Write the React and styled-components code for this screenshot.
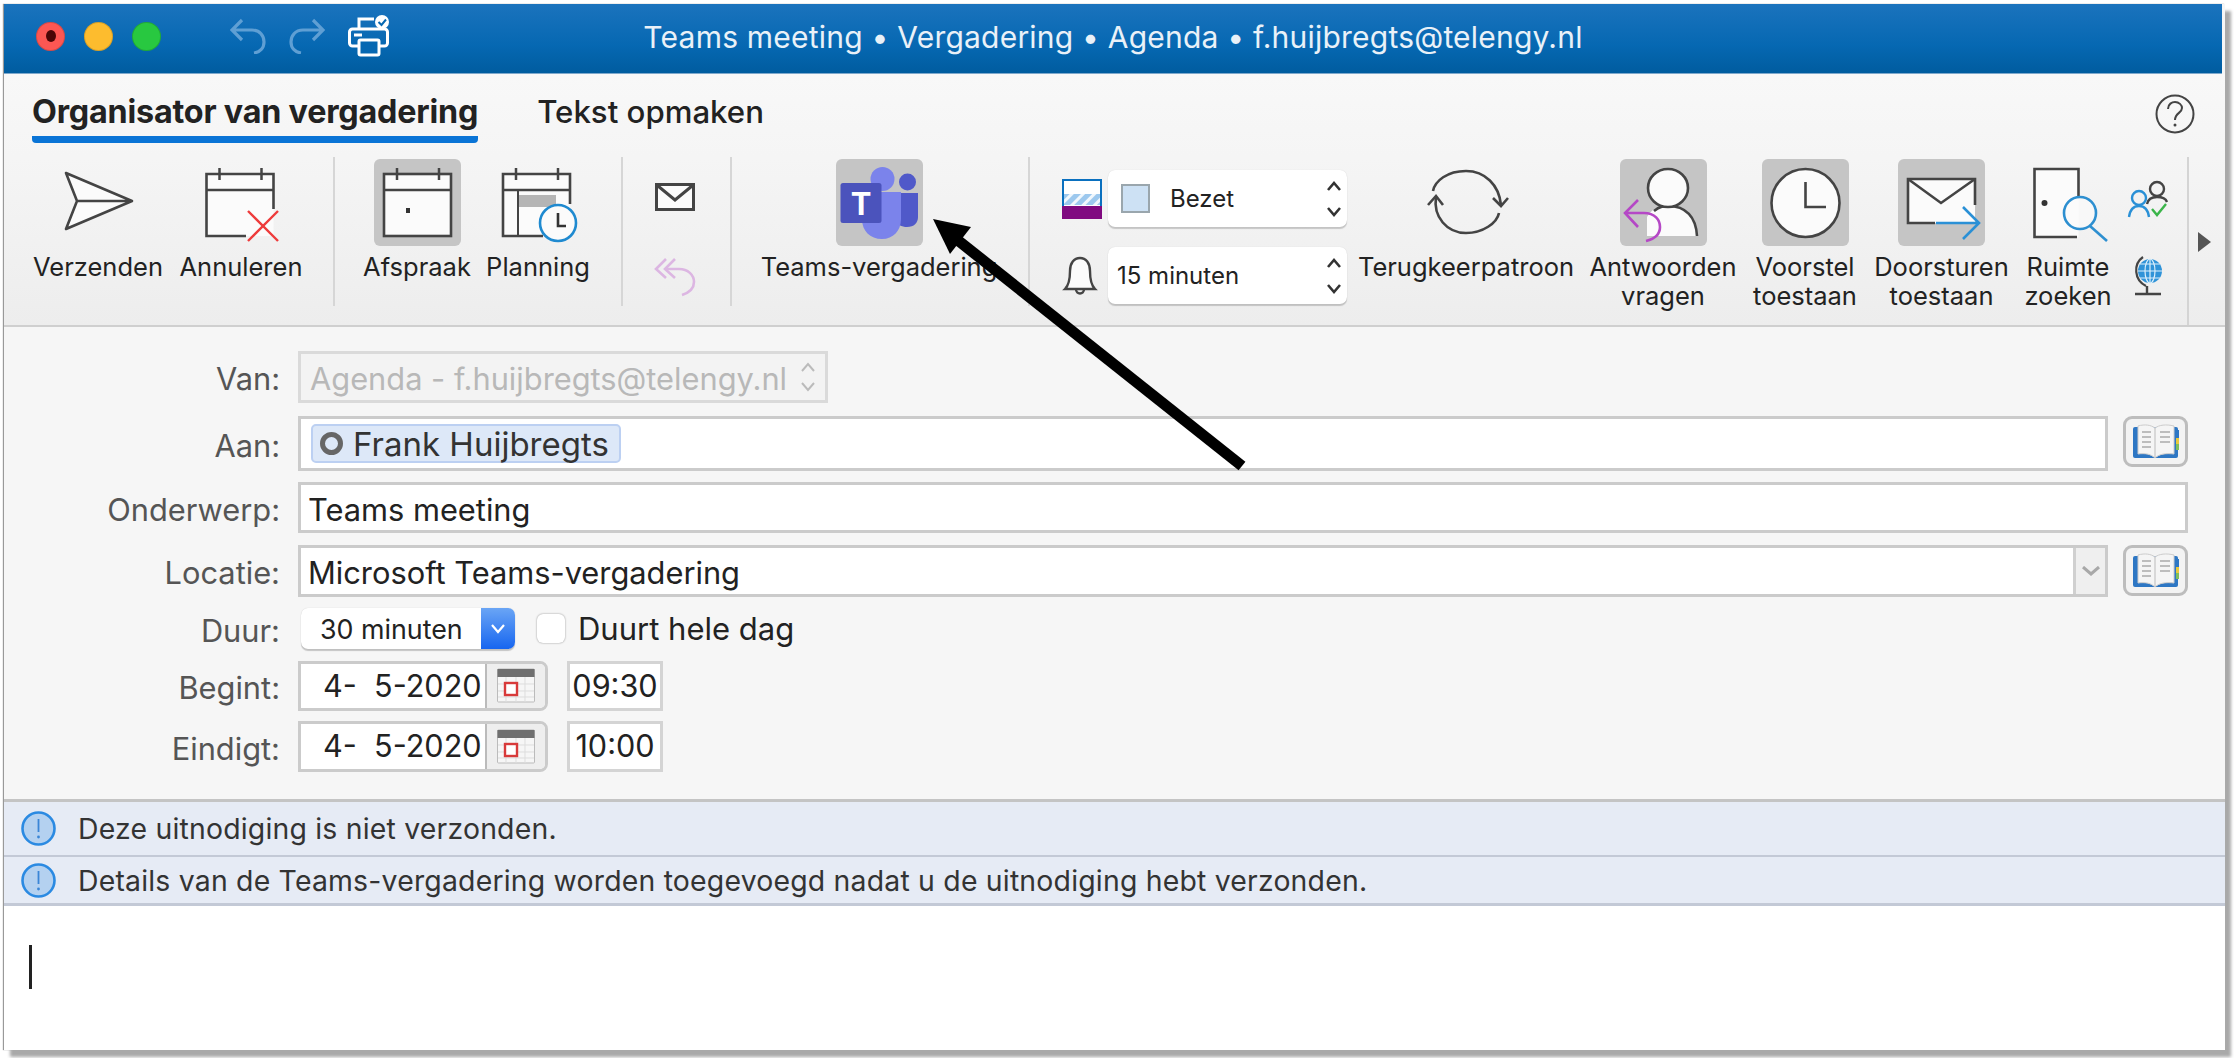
import React from "react";
import styled, { createGlobalStyle } from "styled-components";

const Global = createGlobalStyle`
  html, body { margin: 0; padding: 0; background: #fff; }
  body { font-family: Inter, "Liberation Sans", sans-serif; color: #222; }
`;

const Page = styled.div`
  position: relative;
  width: 2234px;
  height: 1058px;
  padding: 4px 0 0 4px;
  box-sizing: border-box;
  overflow: hidden;
  background: #fff;
`;
const Win = styled.div`
  width: 2221px;
  height: 1046px;
  display: flex;
  flex-direction: column;
  background: #f6f6f6;
  box-shadow: 6px 7px 3px #a9a9a9, -1px 0 1px #999;
`;
const TitleBar = styled.div`
  flex: 0 0 70px;
  position: relative;
  display: flex;
  align-items: center;
  justify-content: center;
  margin-right: 3px;
  background: linear-gradient(#1b73bd, #0668b2 60%, #005c9f);
  border-bottom: 1px solid #7fa9cc;
  box-sizing: border-box;
`;
const TitleLeft = styled.div`
  position: absolute;
  left: 32px;
  top: 0;
  height: 64px;
  display: flex;
  align-items: center;
`;
const Light = styled.span`
  width: 29px;
  height: 29px;
  border-radius: 50%;
  margin-right: 19px;
  background: ${(p) => p.$c};
  box-shadow: inset 0 0 0 1px rgba(0, 0, 0, 0.15);
  display: flex;
  align-items: center;
  justify-content: center;
`;
const LightDot = styled.span`
  width: 10px;
  height: 12px;
  border-radius: 50%;
  background: #4a0606;
`;
const TitleIcons = styled.div`
  display: flex;
  align-items: center;
  margin-left: 50px;
  gap: 23px;
`;
const TitleText = styled.div`
  color: #e9f1f8;
  font-size: 30px;
  letter-spacing: 0.22px;
  margin-top: -4px;
  white-space: nowrap;
`;
const Tabs = styled.div`
  height: 83px;
  display: flex;
  padding-left: 28px;
  position: relative;
  background: linear-gradient(#f8f8f8, #f5f5f5);
  box-sizing: border-box;
`;
const Tab = styled.div`
  height: 69px;
  box-sizing: border-box;
  padding-top: 17px;
  margin-right: 59px;
  font-size: ${(p) => (p.$active ? 32.3 : 31.2)}px;
  line-height: 42px;
  font-weight: ${(p) => (p.$active ? 700 : 500)};
  letter-spacing: ${(p) => (p.$active ? "-0.2px" : "0")};
  color: #222;
  border-bottom: ${(p) => (p.$active ? "7px solid #0a74d6" : "7px solid transparent")};
  border-radius: 0 0 4px 4px;
  white-space: nowrap;
`;
const HelpBtn = styled.div`
  position: absolute;
  left: 2151px;
  top: 20px;
`;
const Tools = styled.div`
  height: 170px;
  display: flex;
  align-items: flex-start;
  padding-left: 30px;
  box-sizing: border-box;
  background: linear-gradient(#f5f5f5, #ededed);
  border-bottom: 2px solid #cfcfcf;
  position: relative;
`;
const ToolsEdge = styled.div`
  position: absolute;
  left: 2183px;
  top: 0;
  bottom: 0;
  width: 2px;
  background: #d4d4d4;
`;
const MoreArrow = styled.div`
  position: absolute;
  left: 2194px;
  top: 75px;
  width: 0;
  height: 0;
  border-left: 13px solid #555;
  border-top: 10px solid transparent;
  border-bottom: 10px solid transparent;
`;
const Divider = styled.div`
  flex: none;
  width: 2px;
  height: 149px;
  background: #d6d6d6;
  margin-left: ${(p) => p.$ml}px;
`;
const Tool = styled.div`
  flex: none;
  width: ${(p) => p.$w}px;
  margin-left: ${(p) => p.$ml}px;
  display: flex;
  flex-direction: column;
  align-items: center;
  padding-top: 2px;
`;
const IconSlot = styled.div`
  width: 87px;
  height: 87px;
  border-radius: 6px;
  background: ${(p) => (p.$on ? "#c5c5c5" : "transparent")};
  flex: none;
  svg { display: block; overflow: visible; }
`;
const ToolLabel = styled.div`
  margin-top: 6px;
  font-size: 25.5px;
  line-height: 29px;
  text-align: center;
  white-space: nowrap;
  color: #222;
`;
const SmallStack = styled.div`
  flex: none;
  width: ${(p) => p.$w}px;
  margin-left: ${(p) => p.$ml}px;
  display: flex;
  flex-direction: column;
  align-items: center;
  padding-top: ${(p) => p.$pt}px;
  gap: ${(p) => p.$gap}px;
  svg { display: block; overflow: visible; }
`;
const StatusBlock = styled.div`
  flex: none;
  margin-left: 32px;
  width: 285px;
  padding-top: 13px;
  display: flex;
  flex-direction: column;
  gap: 20px;
`;
const StatusRow = styled.div`
  display: flex;
  align-items: center;
  svg { display: block; flex: none; }
`;
const IconBox = styled.div`
  width: 46px;
  flex: none;
  display: flex;
  justify-content: flex-start;
`;
const Select = styled.div`
  width: 239px;
  height: 57px;
  box-sizing: border-box;
  background: #fff;
  border-radius: 7px;
  box-shadow: 0 2px 1px rgba(0, 0, 0, 0.18), 0 0 1px rgba(0, 0, 0, 0.15);
  display: flex;
  align-items: center;
  padding: 0 6px 0 ${(p) => p.$pl}px;
  font-size: 24px;
  color: #222;
`;
const Swatch = styled.span`
  width: 29px;
  height: 29px;
  box-sizing: border-box;
  background: #cde1f4;
  border: 2px solid #9aa6ad;
  margin-right: 20px;
  flex: none;
`;
const Spacer = styled.span`
  flex: 1;
`;
const Form = styled.div`
  height: 475px;
  box-sizing: border-box;
  padding-top: 24px;
  background: #f6f6f6;
  border-bottom: 3px solid #c4c4c4;
`;
const Row = styled.div`
  display: flex;
  align-items: center;
  height: ${(p) => p.$h}px;
  margin-top: ${(p) => p.$mt}px;
`;
const Label = styled.div`
  flex: none;
  width: 276px;
  text-align: right;
  margin-right: 18px;
  padding-top: 3px;
  font-size: 30.8px;
  color: #555;
  white-space: nowrap;
`;
const Field = styled.div`
  height: 100%;
  width: ${(p) => p.$w}px;
  box-sizing: border-box;
  border: 3px solid ${(p) => (p.$muted ? "#dadada" : "#cbcbcb")};
  background: ${(p) => (p.$muted ? "#f3f3f3" : "#fff")};
  color: ${(p) => (p.$muted ? "#b8b8b8" : "#222")};
  font-size: 30.8px;
  display: flex;
  align-items: center;
  padding-left: ${(p) => p.$pl}px;
  white-space: nowrap;
  flex: none;
`;
const FieldText = styled.span`
  padding-top: 3px;
`;
const Chip = styled.div`
  height: 39px;
  box-sizing: border-box;
  border: 2px solid #bcd0f2;
  border-radius: 5px;
  background: #dde8f8;
  display: flex;
  align-items: center;
  padding: 0 10px 0 7px;
  font-size: 33px;
  color: #333;
`;
const ChipDot = styled.span`
  width: 23px;
  height: 23px;
  box-sizing: border-box;
  border: 5px solid #666;
  border-radius: 50%;
  margin-right: 10px;
  flex: none;
`;
const DropPart = styled.div`
  margin-left: auto;
  width: 32px;
  height: 100%;
  background: #efefef;
  border-left: 3px solid #d0d0d0;
  box-sizing: border-box;
  display: flex;
  align-items: center;
  justify-content: center;
`;
const BookBtn = styled.div`
  flex: none;
  width: 65px;
  height: 51px;
  margin-left: 15px;
  align-self: flex-start;
  box-sizing: border-box;
  border: 3px solid #bdbdbd;
  border-radius: 9px;
  background: #f3f3f3;
  display: flex;
  align-items: center;
  justify-content: center;
`;
const DurSelect = styled.div`
  margin-left: 3px;
  width: 214px;
  height: 41px;
  flex: none;
  box-sizing: border-box;
  border-radius: 7px;
  background: #fff;
  box-shadow: 0 2px 1px rgba(0, 0, 0, 0.2), 0 0 1px rgba(0, 0, 0, 0.2);
  display: flex;
  align-items: center;
  padding-left: 19px;
  font-size: 26.8px;
  color: #222;
  overflow: hidden;
  white-space: nowrap;
`;
const DurBlue = styled.span`
  margin-left: auto;
  width: 34px;
  height: 100%;
  background: linear-gradient(#6aa5f5, #1766f0);
  display: flex;
  align-items: center;
  justify-content: center;
`;
const Check = styled.span`
  width: 28px;
  height: 29px;
  box-sizing: border-box;
  margin-left: 22px;
  background: #fff;
  border-radius: 6px;
  box-shadow: 0 0 2px rgba(0, 0, 0, 0.45);
  flex: none;
`;
const CheckText = styled.span`
  margin-left: 13px;
  font-size: 31px;
  color: #222;
`;
const DateField = styled.div`
  height: 100%;
  width: 250px;
  flex: none;
  display: flex;
  box-sizing: border-box;
  border: 3px solid #cbcbcb;
  border-radius: 0 8px 8px 0;
  background: #fff;
`;
const DateText = styled.div`
  width: 184px;
  flex: none;
  box-sizing: border-box;
  padding: 0 0 2px 22px;
  display: flex;
  align-items: center;
  font-size: 30.6px;
  white-space: pre;
  color: #222;
`;
const DateBtn = styled.div`
  flex: 1;
  background: #eee;
  border-left: 2px solid #bbb;
  border-radius: 0 5px 5px 0;
  display: flex;
  align-items: center;
  justify-content: center;
`;
const TimeField = styled.div`
  height: 100%;
  width: 96px;
  flex: none;
  margin-left: 19px;
  box-sizing: border-box;
  border: 3px solid #d4d4d4;
  background: #fff;
  display: flex;
  align-items: center;
  justify-content: center;
  padding-bottom: 2px;
  font-size: 30.6px;
  color: #222;
`;
const InfoBar = styled.div`
  height: ${(p) => p.$h}px;
  box-sizing: border-box;
  background: #e6ebf5;
  border-bottom: ${(p) => p.$b}px solid #c3c9d6;
  display: flex;
  align-items: center;
  padding-left: 17px;
  font-size: 28.4px;
  letter-spacing: 0.2px;
  color: #333;
  white-space: nowrap;
  svg { flex: none; margin-right: 22px; }
`;
const Body = styled.div`
  flex: 1;
  background: #fff;
  padding: 39px 0 0 25px;
`;
const Caret = styled.div`
  width: 3px;
  height: 44px;
  background: #222;
`;
const ArrowOverlay = styled.svg`
  position: absolute;
  left: 0;
  top: 0;
  pointer-events: none;
`;

const D = "#444";

const Chevrons = ({ color = "#333" }) => (
  <svg width="14" height="38" viewBox="0 0 14 38" fill="none" stroke={color} strokeWidth="2.6">
    <path d="M1 10 L7 3 L13 10" />
    <path d="M1 28 L7 35 L13 28" />
  </svg>
);
const CalBody = ({ x = 8.5 }) => (
  <g stroke={D} strokeWidth="2.5" fill="none">
    <path d={`M${x + 13} 9 V21 M${x + 55} 9 V21`} />
    <path d={`M${x} 31 H${x + 67}`} />
  </g>
);
const Send = () => (
  <svg width="87" height="87" viewBox="0 0 87 87">
    <path d="M11 14 L77 42 L11 70 L22 42 Z M22 42 H77" fill="#fbfbfb" stroke={D} strokeWidth="2.6" strokeLinejoin="round" />
  </svg>
);
const Cancel = () => (
  <svg width="87" height="87" viewBox="0 0 87 87">
    <path d="M8.5 15 H75.5 V77 H8.5 Z" fill="#fbfbfb" />
    <path d="M48 77 H8.5 V15 H75.5 V50" fill="none" stroke={D} strokeWidth="2.6" />
    <CalBody />
    <path d="M50 52 L80 82 M80 52 L50 82" stroke="#ee3b3b" strokeWidth="2.4" />
  </svg>
);
const Appt = () => (
  <svg width="87" height="87" viewBox="0 0 87 87">
    <rect x="10" y="15" width="67" height="62" fill="#fbfbfb" stroke={D} strokeWidth="2.6" />
    <CalBody x={10} />
    <rect x="32" y="49" width="4" height="5" fill="#333" />
  </svg>
);
const Planning = () => (
  <svg width="87" height="87" viewBox="0 0 87 87">
    <path d="M8 15 H75 V77 H8 Z" fill="#fbfbfb" />
    <rect x="23" y="36" width="38" height="12" fill="#b5b5b5" />
    <path d="M48 77 H8 V15 H75 V45" fill="none" stroke={D} strokeWidth="2.6" />
    <path d="M23 31 V77" stroke={D} strokeWidth="2" />
    <CalBody x={8} />
    <circle cx="63" cy="64" r="18" fill="#fbfbfb" stroke="#1f8ad0" strokeWidth="2.6" />
    <path d="M63 54 V67 H71" fill="none" stroke="#333" strokeWidth="2.6" />
  </svg>
);
const MailSmall = () => (
  <svg width="40" height="28" viewBox="0 0 40 28" fill="#fbfbfb" stroke={D} strokeWidth="3">
    <rect x="1.5" y="1.5" width="37" height="25" />
    <path d="M3 3 L20 17 L37 3" fill="none" />
  </svg>
);
const ReplyAllPale = () => (
  <svg width="40" height="38" viewBox="0 0 40 38" fill="none" stroke="#dcb6e2" strokeWidth="2.6">
    <path d="M11 1 L1 11 L11 20" />
    <path d="M20 1 L10 11 L20 20" />
    <path d="M10 11 H24 C33 11 39 17 39 24 C39 31 33 35 27 37" />
  </svg>
);
const TeamsLogo = () => (
  <svg width="87" height="87" viewBox="0 0 87 87">
    <circle cx="71.5" cy="23" r="8.5" fill="#5059c9" />
    <path d="M60 34 H82 V58 C82 64 78 68 71 68 C66 68 60 66 60 60 Z" fill="#5059c9" />
    <circle cx="46.5" cy="20" r="12" fill="#7b83eb" />
    <path d="M26 33 H65 V60 C65 72 57 80 46 80 C34 80 26 72 26 60 Z" fill="#7b83eb" />
    <rect x="4.5" y="24" width="41" height="40" rx="2.5" fill="#4b53bc" />
    <text x="25" y="56" textAnchor="middle" fontFamily="Inter, sans-serif" fontWeight="700" fontSize="31" fill="#fff">T</text>
  </svg>
);
const StatusIcon = () => (
  <svg width="40" height="40" viewBox="0 0 40 40">
    <defs>
      <pattern id="hatch" width="8" height="8" patternUnits="userSpaceOnUse" patternTransform="rotate(45)">
        <rect width="8" height="8" fill="#9cc8ee" />
        <rect width="3" height="8" fill="#f0f7fd" />
      </pattern>
    </defs>
    <rect x="1" y="1" width="38" height="38" fill="#fff" stroke="#0a70bf" strokeWidth="2" />
    <rect x="2" y="15" width="36" height="11" fill="url(#hatch)" />
    <rect x="0" y="27" width="40" height="13" fill="#800a80" />
  </svg>
);
const Bell = () => (
  <svg width="36" height="40" viewBox="0 0 36 40" fill="#fbfbfb" stroke={D} strokeWidth="2.4">
    <path d="M3 33 C7 29 8 24 8 15 C8 7 12 2 18 2 C24 2 28 7 28 15 C28 24 29 29 33 33 Z" />
    <path d="M14 33 C14 39 22 39 22 33" fill="none" />
  </svg>
);
const Recur = () => (
  <svg width="87" height="87" viewBox="0 0 87 87" fill="none" stroke={D} strokeWidth="2.6">
    <path d="M43 12 C24 12 12 22 10 32" />
    <path d="M5 46 L13 37 L20 46" />
    <path d="M13 38 C10 58 24 74 43 74 C60 74 74 64 76 54" />
    <path d="M43 12 C62 12 76 26 78 46" />
    <path d="M70 39 L78 47 L85 39" />
  </svg>
);
const Asker = () => (
  <svg width="87" height="87" viewBox="0 0 87 87">
    <path d="M27 77 V58 C31 50 39 47 48 47 C66 47 76 58 77 77 Z" fill="#fbfbfb" />
    <path d="M34 52 C40 47 44 47 48 47 C66 47 76 58 77 77" fill="none" stroke={D} strokeWidth="2.6" />
    <ellipse cx="48" cy="29" rx="20" ry="19" fill="#fbfbfb" stroke={D} strokeWidth="2.6" />
    <path d="M18 41 L5 54 L18 68 M5 54 H24 C35 54 40 61 40 68 C40 76 34 80 26 82" fill="none" stroke="#b548c6" strokeWidth="2.6" />
  </svg>
);
const Clock = () => (
  <svg width="87" height="87" viewBox="0 0 87 87">
    <circle cx="43.5" cy="44" r="34" fill="#fbfbfb" stroke={D} strokeWidth="2.6" />
    <path d="M43.5 23 V48 H64" fill="none" stroke={D} strokeWidth="2.6" />
  </svg>
);
const Forward = () => (
  <svg width="87" height="87" viewBox="0 0 87 87">
    <rect x="10" y="20" width="67" height="44" fill="#fbfbfb" />
    <path d="M37 64 H10 V20 H77 V46" fill="none" stroke={D} strokeWidth="2.6" />
    <path d="M10 20 L43 44 L77 20" fill="none" stroke={D} strokeWidth="2.6" />
    <path d="M38 64 H81 M65 48 L81 64 L65 80" fill="none" stroke="#2a90d6" strokeWidth="2.6" />
  </svg>
);
const RoomFind = () => (
  <svg width="87" height="87" viewBox="0 0 87 87">
    <rect x="9.5" y="10" width="44" height="68" fill="#fbfbfb" />
    <path d="M53.5 38 V10 H9.5 V78 H52" fill="none" stroke={D} strokeWidth="2.6" />
    <circle cx="19.5" cy="44" r="3" fill="#333" />
    <circle cx="55" cy="54" r="16" fill="#fbfbfb" fillOpacity="0.6" stroke="#2d8fd0" strokeWidth="2.6" />
    <path d="M65 67 L82 82" stroke="#2d8fd0" strokeWidth="2.6" />
  </svg>
);
const People = () => (
  <svg width="40" height="38" viewBox="0 0 40 38" fill="none" strokeWidth="2.4">
    <circle cx="29" cy="9" r="7" stroke={D} />
    <path d="M19 24 C20 19 24 17 29 17 C34 17 38 19 39 22" stroke={D} />
    <circle cx="11" cy="18" r="7" stroke="#2a90d6" fill="#f2f2f2" />
    <path d="M1 37 C2 30 5 26 11 26 C17 26 20 30 21 37" stroke="#2a90d6" />
    <path d="M24 29 L29 35 L38 24" stroke="#3bb54a" />
  </svg>
);
const Globe = () => (
  <svg width="30" height="40" viewBox="0 0 30 40" fill="none">
    <circle cx="17" cy="15" r="12" fill="#2f93d8" />
    <g stroke="#dbeffb" strokeWidth="1.2">
      <ellipse cx="17" cy="15" rx="5" ry="12" />
      <path d="M5 15 H29 M7 8 H27 M7 22 H27 M17 3 V27" />
    </g>
    <path d="M10 1 C0 8 1 24 13 30" stroke={D} strokeWidth="2.2" />
    <path d="M14 30 V37 M2 38 H28" stroke={D} strokeWidth="2.4" />
  </svg>
);
const Book = () => (
  <svg width="46" height="36" viewBox="0 0 46 36">
    <rect x="0" y="3" width="45" height="31" rx="2" fill="#2e77c4" />
    <rect x="43" y="6" width="3" height="8" fill="#2e77c4" />
    <rect x="43" y="14" width="3" height="6" fill="#e9c93a" />
    <rect x="43" y="20" width="3" height="6" fill="#7fbf5c" />
    <path d="M5 2 C12 0 18 1 22 4 C26 1 33 0 41 2 V30 C33 29 26 30 22 34 C18 30 12 29 5 30 Z" fill="#f5f5f5" stroke="#ccc" strokeWidth="1" />
    <path d="M9 8 H18 M9 13 H18 M9 18 H18 M9 23 H18 M27 8 H37 M27 13 H37 M27 18 H37" stroke="#aaa" strokeWidth="1.6" />
    <path d="M22 4 V34" stroke="#bbb" strokeWidth="1" />
  </svg>
);
const CalSmall = () => (
  <svg width="38" height="36" viewBox="0 0 38 36">
    <rect x="0.5" y="1" width="37" height="33" rx="1" fill="#f6f6f6" stroke="#bbb" />
    <rect x="0.5" y="1" width="37" height="8" fill="#6f6f6f" />
    <path d="M1 16 H37 M1 23 H37 M1 29 H37 M9 9 V34 M19 9 V34 M28 9 V34" stroke="#ddd" strokeWidth="1" />
    <rect x="8" y="15" width="12" height="12" fill="#fff" stroke="#d83a3a" strokeWidth="2.4" />
  </svg>
);
const Info = () => (
  <svg width="35" height="35" viewBox="0 0 35 35">
    <circle cx="17.5" cy="17.5" r="16" fill="#b4d1f0" stroke="#2b8ae2" strokeWidth="2.6" />
    <path d="M17.5 8 V21" stroke="#3a86d6" strokeWidth="1.8" />
    <circle cx="17.5" cy="26" r="1.4" fill="#3a86d6" />
  </svg>
);

const tools = [
  ["Terugkeerpatroon", Recur, false, 214, 12],
  ["Antwoorden\nvragen", Asker, true, 144, 18],
  ["Voorstel\ntoestaan", Clock, true, 104, 18],
  ["Doorsturen\ntoestaan", Forward, true, 133, 18],
  ["Ruimte\nzoeken", RoomFind, false, 84, 18],
];

const ToolItem = ({ w, ml, on, icon: Icon, text }) => (
  <Tool $w={w} $ml={ml}>
    <IconSlot $on={on}><Icon /></IconSlot>
    <ToolLabel>
      {text.split("\n").map((t) => <div key={t}>{t}</div>)}
    </ToolLabel>
  </Tool>
);

export default function App() {
  return (
    <Page>
      <Global />
      <Win>
        <TitleBar>
          <TitleLeft>
            <Light $c="#fc5753"><LightDot /></Light>
            <Light $c="#fdbc2e" />
            <Light $c="#28c840" />
            <TitleIcons>
              <svg width="36" height="36" viewBox="0 0 36 36" fill="none" stroke="#5f9fd4" strokeWidth="3.2">
                <path d="M12 2 L2 12 L12 22 M2 12 H22 C30 12 34 18 34 24 C34 30 30 34 24 35" />
              </svg>
              <svg width="36" height="36" viewBox="0 0 36 36" fill="none" stroke="#5f9fd4" strokeWidth="3.2">
                <path d="M24 2 L34 12 L24 22 M34 12 H14 C6 12 2 18 2 24 C2 30 6 34 12 35" />
              </svg>
              <svg width="42" height="42" viewBox="0 0 42 42" fill="none" stroke="#fff" strokeWidth="3">
                <path d="M11 14 V4 H26" />
                <rect x="1.5" y="14" width="38" height="17" rx="3" />
                <rect x="11" y="25" width="20" height="15" rx="1.5" fill="#0668b2" />
                <path d="M6 20 H14" />
                <circle cx="34" cy="7" r="7" fill="#fff" stroke="none" />
                <path d="M30.5 7 L33.5 10 L38 4.5" stroke="#0668b2" strokeWidth="2" />
              </svg>
            </TitleIcons>
          </TitleLeft>
          <TitleText>Teams meeting • Vergadering • Agenda • f.huijbregts@telengy.nl</TitleText>
        </TitleBar>
        <Tabs>
          <Tab $active>Organisator van vergadering</Tab>
          <Tab>Tekst opmaken</Tab>
          <HelpBtn>
            <svg width="40" height="40" viewBox="0 0 40 40" fill="none" stroke="#444" strokeWidth="2">
              <circle cx="20" cy="20" r="18.5" />
              <path d="M13 15 C13 10 17 8 20 8 C24 8 27 11 27 14 C27 19 20 19 20 26" />
              <circle cx="20" cy="31" r="1.5" fill="#444" stroke="none" />
            </svg>
          </HelpBtn>
        </Tabs>
        <Tools>
          <ToolItem w={128} ml={0} icon={Send} text="Verzenden" />
          <ToolItem w={120} ml={19} icon={Cancel} text="Annuleren" />
          <Divider $ml={32} />
          <ToolItem w={108} ml={28} on icon={Appt} text="Afspraak" />
          <ToolItem w={102} ml={16} icon={Planning} text="Planning" />
          <Divider $ml={32} />
          <SmallStack $w={40} $ml={32} $pt={26} $gap={47}>
            <MailSmall />
            <ReplyAllPale />
          </SmallStack>
          <Divider $ml={35} />
          <ToolItem w={234} ml={30} on icon={TeamsLogo} text="Teams-vergadering" />
          <Divider $ml={32} />
          <StatusBlock>
            <StatusRow>
              <IconBox><StatusIcon /></IconBox>
              <Select $pl={13}>
                <Swatch />
                Bezet
                <Spacer />
                <Chevrons />
              </Select>
            </StatusRow>
            <StatusRow>
              <IconBox><Bell /></IconBox>
              <Select $pl={9}>
                15 minuten
                <Spacer />
                <Chevrons />
              </Select>
            </StatusRow>
          </StatusBlock>
          {tools.map(([text, icon, on, w, ml]) => (
            <ToolItem key={text} w={w} ml={ml} on={on} icon={icon} text={text} />
          ))}
          <SmallStack $w={40} $ml={18} $pt={23} $gap={38}>
            <People />
            <Globe />
          </SmallStack>
          <ToolsEdge />
          <MoreArrow />
        </Tools>
        <Form>
          <Row $h={52} $mt={0}>
            <Label>Van:</Label>
            <Field $w={530} $pl={9} $muted>
              <FieldText>Agenda - f.huijbregts@telengy.nl</FieldText>
              <Spacer />
              <svg width="16" height="30" viewBox="0 0 16 30" fill="none" stroke="#bbb" strokeWidth="2" style={{ marginRight: 9 }}>
                <path d="M2 9 L8 2 L14 9 M2 21 L8 28 L14 21" />
              </svg>
            </Field>
          </Row>
          <Row $h={55} $mt={13}>
            <Label>Aan:</Label>
            <Field $w={1810} $pl={10}>
              <Chip><ChipDot />Frank Huijbregts</Chip>
            </Field>
            <BookBtn><Book /></BookBtn>
          </Row>
          <Row $h={51} $mt={11}>
            <Label>Onderwerp:</Label>
            <Field $w={1890} $pl={7}><FieldText>Teams meeting</FieldText></Field>
          </Row>
          <Row $h={52} $mt={12}>
            <Label>Locatie:</Label>
            <Field $w={1810} $pl={7}>
              <FieldText>Microsoft Teams-vergadering</FieldText>
              <DropPart>
                <svg width="18" height="10" viewBox="0 0 18 10" fill="none" stroke="#a8a8a8" strokeWidth="3">
                  <path d="M1 1 L9 8 L17 1" />
                </svg>
              </DropPart>
            </Field>
            <BookBtn><Book /></BookBtn>
          </Row>
          <Row $h={41} $mt={11}>
            <Label>Duur:</Label>
            <DurSelect>
              30 minuten
              <DurBlue>
                <svg width="14" height="10" viewBox="0 0 14 10" fill="none" stroke="#fff" strokeWidth="2.2">
                  <path d="M1 1 L7 8 L13 1" />
                </svg>
              </DurBlue>
            </DurSelect>
            <Check />
            <CheckText>Duurt hele dag</CheckText>
          </Row>
          <Row $h={50} $mt={12}>
            <Label>Begint:</Label>
            <DateField>
              <DateText>{"4-  5-2020"}</DateText>
              <DateBtn><CalSmall /></DateBtn>
            </DateField>
            <TimeField>09:30</TimeField>
          </Row>
          <Row $h={51} $mt={10}>
            <Label>Eindigt:</Label>
            <DateField>
              <DateText>{"4-  5-2020"}</DateText>
              <DateBtn><CalSmall /></DateBtn>
            </DateField>
            <TimeField>10:00</TimeField>
          </Row>
        </Form>
        <InfoBar $h={55} $b={2}>
          <Info />
          Deze uitnodiging is niet verzonden.
        </InfoBar>
        <InfoBar $h={49} $b={3}>
          <Info />
          Details van de Teams-vergadering worden toegevoegd nadat u de uitnodiging hebt verzonden.
        </InfoBar>
        <Body><Caret /></Body>
      </Win>
      <ArrowOverlay width="2234" height="1058" viewBox="0 0 2234 1058">
        <path d="M1242 466 L955 238" stroke="#000" strokeWidth="11" />
        <polygon points="933,219 971,227 950,254" fill="#000" />
      </ArrowOverlay>
    </Page>
  );
}
